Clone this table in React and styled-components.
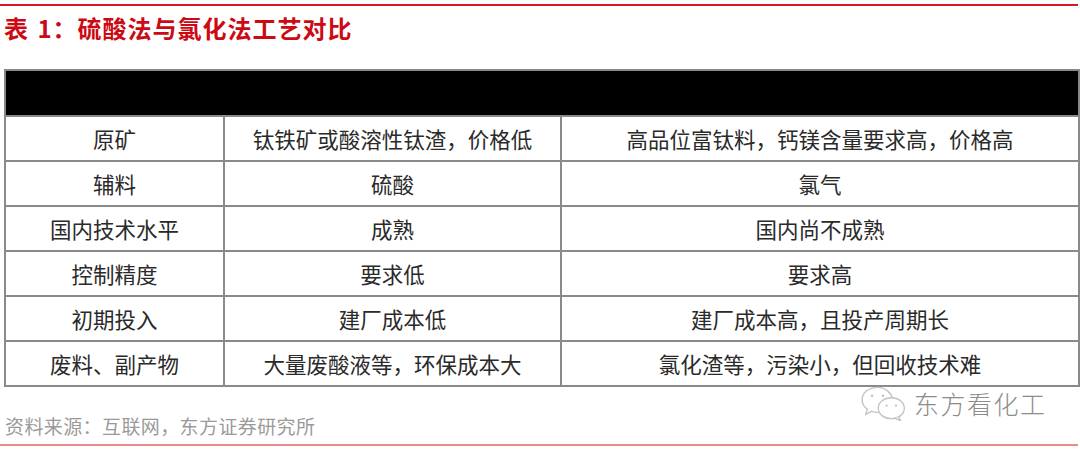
import React from "react";
import styled, { createGlobalStyle } from "styled-components";

const Global = createGlobalStyle`
  html, body { margin: 0; padding: 0; background: #fff; }
  body { font-family: "Noto Sans CJK SC", "Noto Sans", sans-serif; }
`;

const Page = styled.div`
  position: relative;
  width: 1080px;
  height: 450px;
  overflow: hidden;
  display: flex;
  flex-direction: column;
`;

const Rule = styled.div`
  margin-top: ${(p) => p.$top}px;
  width: 1078px;
  height: 2px;
  flex-shrink: 0;
  background: ${(p) => p.$color};
`;

const Title = styled.h1`
  margin: 6px 0 0 4px;
  font-size: 24px;
  line-height: 32px;
  font-weight: 700;
  color: #cc0a14;
  letter-spacing: 1px;
  word-spacing: 2px;
`;

const Table = styled.table`
  margin: 25px 0 0 4px;
  width: 1074px;
  border-collapse: collapse;
  table-layout: fixed;
  font-size: 21.5px;
  color: #2a2a2a;
`;

const HeadCell = styled.th`
  height: 44px;
  padding: 0;
  background: #000;
  border: 2px solid #888;
  border-bottom: none;
`;

const Cell = styled.td`
  height: 43px;
  padding: 0;
  border: 2px solid #8a8a8a;
  text-align: center;
  vertical-align: middle;
  line-height: 26px;
  font-weight: 400;
`;

const Source = styled.div`
  margin: 26px 0 0 5px;
  font-size: 19px;
  line-height: 26px;
  color: #9a9a9a;
  letter-spacing: 0.4px;
`;

const Watermark = styled.div`
  position: absolute;
  left: 860px;
  top: 385px;
  display: flex;
  align-items: center;
  gap: 6px;
  color: #8c8c8c;
  font-size: 25px;
  font-weight: 300;
  letter-spacing: 1.5px;
`;

const rows = [
  ["原矿", "钛铁矿或酸溶性钛渣，价格低", "高品位富钛料，钙镁含量要求高，价格高"],
  ["辅料", "硫酸", "氯气"],
  ["国内技术水平", "成熟", "国内尚不成熟"],
  ["控制精度", "要求低", "要求高"],
  ["初期投入", "建厂成本低", "建厂成本高，且投产周期长"],
  ["废料、副产物", "大量废酸液等，环保成本大", "氯化渣等，污染小，但回收技术难"],
];

const WeChat = () => (
  <svg width="48" height="36" viewBox="0 0 46 34" fill="none" stroke="#c4c4c4" strokeWidth="1.3">
    <path d="M17 2 C8 2 2 7.5 2 14 C2 17.8 4 20.8 7 23 L5.5 28 L11 25 C13 25.7 15 26 17 26 C18 26 19 26 19.5 25.8" fill="#fff" />
    <path d="M31.5 14.5 C30.5 7.5 24.5 2 17 2" />
    <ellipse cx="30" cy="22" rx="12.5" ry="10" fill="#fff" />
    <path d="M37 30.5 L39 34 L33.5 31.7" fill="#fff" />
    <circle cx="11.5" cy="10" r="1.2" fill="#c4c4c4" stroke="none" />
    <circle cx="22" cy="10" r="1.2" fill="#c4c4c4" stroke="none" />
    <circle cx="25.5" cy="19.5" r="1.1" fill="#c4c4c4" stroke="none" />
    <circle cx="34.5" cy="19.5" r="1.1" fill="#c4c4c4" stroke="none" />
  </svg>
);

export default function App() {
  return (
    <Page>
      <Global />
      <Rule $top={4} $color="#d21a22" />
      <Title>表 1：硫酸法与氯化法工艺对比</Title>
      <Table>
        <colgroup>
          <col style={{ width: "219px" }} />
          <col style={{ width: "337px" }} />
          <col style={{ width: "518px" }} />
        </colgroup>
        <thead>
          <tr>
            <HeadCell colSpan={3} />
          </tr>
        </thead>
        <tbody>
          {rows.map((r) => (
            <tr key={r[0]}>
              {r.map((c, i) => (
                <Cell key={i}>{c}</Cell>
              ))}
            </tr>
          ))}
        </tbody>
      </Table>
      <Source>资料来源：互联网，东方证券研究所</Source>
      <Rule $top={5} $color="#ec8b8b" />
      <Watermark>
        <WeChat />
        <span>东方看化工</span>
      </Watermark>
    </Page>
  );
}
